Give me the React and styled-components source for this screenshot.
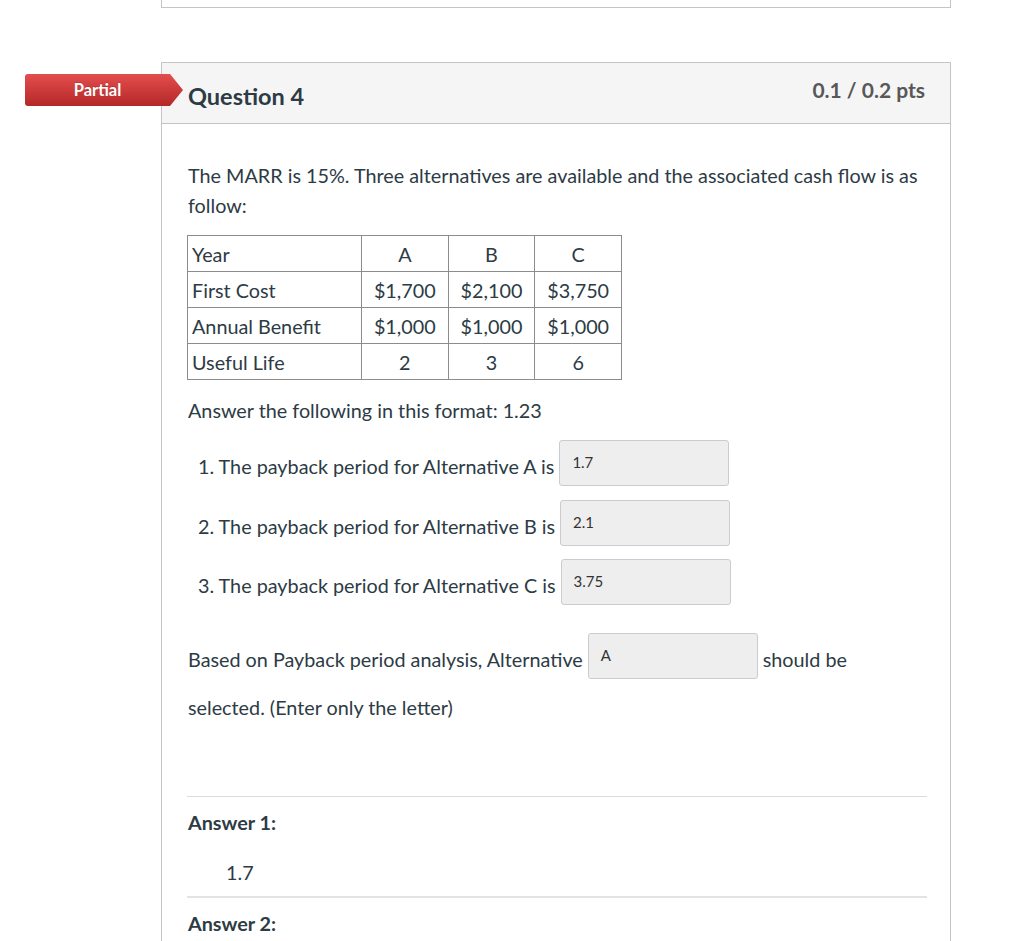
import React from 'react'
import styled, { createGlobalStyle } from 'styled-components'

const GlobalStyle = createGlobalStyle`
  html, body {
    margin: 0;
    padding: 0;
    background: #fff;
  }
  body {
    font-family: Lato, "Open Sans", "Liberation Sans", sans-serif;
    color: #2d3b45;
    font-size: 19.8px;
  }
`

const rows = [
  ['First Cost', '$1,700', '$2,100', '$3,750'],
  ['Annual Benefit', '$1,000', '$1,000', '$1,000'],
  ['Useful Life', '2', '3', '6'],
]

const answers = [
  { label: '1. The payback period for Alternative A is', value: '1.7' },
  { label: '2. The payback period for Alternative B is', value: '2.1' },
  { label: '3. The payback period for Alternative C is', value: '3.75' },
]

function App() {
  return (
    <Wrapper>
      <GlobalStyle />
      <Column>
        <PrevCard />
        <Card>
          <Badge>Partial</Badge>
          <Header>
            <Title>Question 4</Title>
            <Points>0.1 / 0.2 pts</Points>
          </Header>
          <Body>
            <Text>
              The MARR is 15%. Three alternatives are available and the associated cash flow is as
              follow:
            </Text>
            <Table>
              <tbody>
                <tr>
                  <Cell first>Year</Cell>
                  <Cell>A</Cell>
                  <Cell>B</Cell>
                  <Cell>C</Cell>
                </tr>
                {rows.map(r => (
                  <tr key={r[0]}>
                    <Cell first>{r[0]}</Cell>
                    <Cell>{r[1]}</Cell>
                    <Cell>{r[2]}</Cell>
                    <Cell>{r[3]}</Cell>
                  </tr>
                ))}
              </tbody>
            </Table>
            <Text top={15}>Answer the following in this format: 1.23</Text>
            <List>
              {answers.map(a => (
                <InputRow key={a.label} indent>
                  <RowText>{a.label}</RowText>
                  <AnswerBox>{a.value}</AnswerBox>
                </InputRow>
              ))}
            </List>
            <InputRow top={28}>
              <RowText>Based on Payback period analysis, Alternative</RowText>
              <AnswerBox>A</AnswerBox>
              <RowText>should be</RowText>
            </InputRow>
            <Text top={13}>selected. (Enter only the letter)</Text>
            <Divider top={74} />
            <AnswerLabel>Answer 1:</AnswerLabel>
            <AnswerValue>1.7</AnswerValue>
            <Divider thick />
            <AnswerLabel>Answer 2:</AnswerLabel>
          </Body>
        </Card>
      </Column>
    </Wrapper>
  )
}

export default App

const Wrapper = styled.div`
    height: 941px;
    overflow: hidden;
    padding-left: 161px;
`
const Column = styled.div`
    width: 790px;
`
const PrevCard = styled.div`
    height: 7px;
    border: 1px solid #c4c4c4;
    border-top: none;
    margin-bottom: 54px;
`
const Card = styled.div`
    position: relative;
    border: 1px solid #c4c4c4;
    min-height: 900px;
`
const Badge = styled.div`
    position: absolute;
    left: -137px;
    top: 11px;
    width: 158px;
    height: 32px;
    padding-right: 13px;
    box-sizing: border-box;
    display: flex;
    align-items: center;
    justify-content: center;
    color: #fff;
    font-weight: 700;
    font-size: 16.5px;
    border-radius: 3px;
    background: linear-gradient(#e44d4d, #b42828);
    clip-path: polygon(0 0, 145px 0, 158px 50%, 145px 100%, 0 100%);
    text-shadow: 0 -1px 0 rgba(0,0,0,.15);
`
const Header = styled.div`
    height: 60px;
    background: #f5f5f5;
    border-bottom: 1px solid #c4c4c4;
    display: flex;
    justify-content: space-between;
    align-items: flex-start;
    padding: 0 25px 0 26px;
`
const Title = styled.div`
    font-size: 23.5px;
    line-height: 28px;
    font-weight: 700;
    padding-top: 19px;
    color: #2d3b45;
`
const Points = styled.div`
    font-size: 21px;
    line-height: 24px;
    font-weight: 700;
    padding-top: 15px;
    color: #585858;
`
const Body = styled.div`
    padding: 36px 23px 0 25px;
`
const Text = styled.p`
    margin: ${p => p.top || 0}px 0 0;
    line-height: 30px;
    padding-left: 1px;
`
const Table = styled.table`
    border-collapse: collapse;
    margin-top: 15px;
    width: 435px;
`
const Cell = styled.td`
    border: 1px solid #8c8c8c;
    height: 35px;
    padding: 0 4px;
    line-height: 22px;
    width: ${p => p.first ? '165px' : 'auto'};
    text-align: ${p => p.first ? 'left' : 'center'};
`
const List = styled.div`
    display: flex;
    flex-direction: column;
    gap: 13.5px;
    margin-top: 15px;
`
const InputRow = styled.div`
    display: flex;
    align-items: center;
    gap: 5px;
    height: 46px;
    margin-top: ${p => p.top || 0}px;
    padding-left: ${p => p.indent ? '11px' : '1px'};
`
const RowText = styled.span`
    line-height: 30px;
    padding-top: 6px;
    white-space: nowrap;
`
const AnswerBox = styled.div`
    width: 170px;
    height: 46px;
    box-sizing: border-box;
    border: 1px solid #c9cdd1;
    border-radius: 3px;
    background: #eeeeee;
    font-size: 15px;
    color: #333;
    display: flex;
    align-items: center;
    padding: 0 12px 2px;
`
const Divider = styled.div`
    margin-top: ${p => p.top || 0}px;
    border-top: ${p => p.thick ? '2px solid #e3e3e3' : '1px solid #dcdcdc'};
`
const AnswerLabel = styled.div`
    font-weight: 700;
    line-height: 30px;
    margin-top: 10px;
    padding-left: 1px;
`
const AnswerValue = styled.div`
    line-height: 30px;
    margin: 20px 0 9px 39px;
`
